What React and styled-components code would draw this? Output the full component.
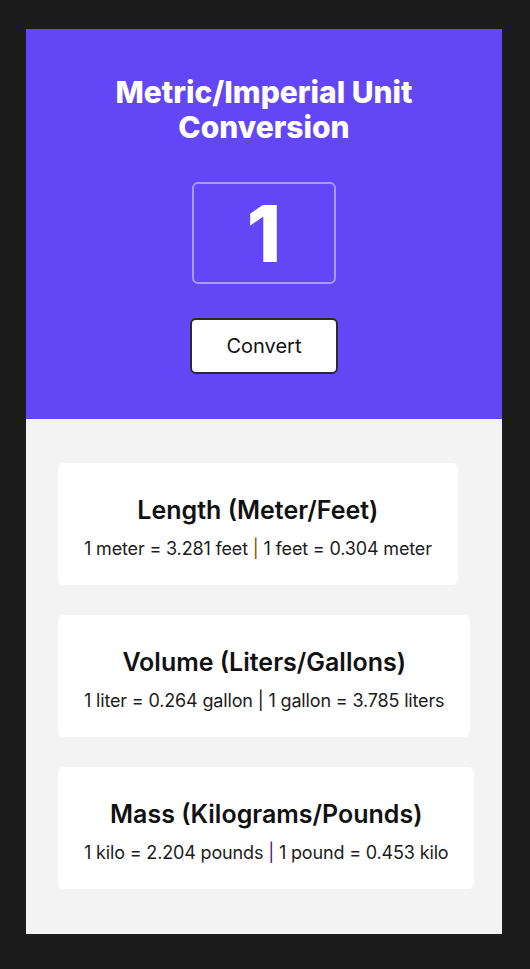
import React, { useState } from "react"
import styled, { createGlobalStyle } from "styled-components"

const GlobalStyle = createGlobalStyle`
  html, body {
    margin: 0;
    padding: 0;
    background: #1c1c1c;
    font-family: Inter, "Noto Sans", sans-serif;
  }
`

const Page = styled.main`
  width: 476px;
  margin: 29px 0 0 26px;
`

const Header = styled.section`
  background: #6346f5;
  color: #fff;
  display: flex;
  flex-direction: column;
  align-items: center;
  padding: 46px 20px 45px;
`

const Title = styled.h1`
  margin: 0;
  font-size: 30px;
  line-height: 35px;
  font-weight: 800;
  text-align: center;
  width: 340px;
`

const NumberInput = styled.input`
  margin-top: 37px;
  width: 144px;
  height: 102px;
  box-sizing: border-box;
  background: transparent;
  border: 2px solid rgba(255, 255, 255, 0.45);
  border-radius: 6px;
  color: #fff;
  font-family: inherit;
  font-size: 78px;
  font-weight: 800;
  text-align: center;
  outline: none;
`

const ConvertButton = styled.button`
  margin-top: 34px;
  width: 148px;
  height: 56px;
  background: #fff;
  border: 2px solid #2a2a2a;
  border-radius: 6px;
  font-family: inherit;
  font-size: 20px;
  color: #111;
  cursor: pointer;
`

const Results = styled.section`
  background: #f3f3f3;
  padding: 44px 32px 45px;
  display: flex;
  flex-direction: column;
  align-items: flex-start;
  gap: 30px;
`

const Card = styled.div`
  background: #fff;
  border-radius: 6px;
  padding: 32px 26px 24px;
  text-align: center;
  white-space: nowrap;
`

const CardTitle = styled.h2`
  margin: 0 0 12px;
  font-size: 25px;
  line-height: 30px;
  font-weight: 600;
  color: #111;
`

const CardText = styled.p`
  margin: 0;
  font-size: 18px;
  line-height: 24px;
  letter-spacing: -0.16px;
  color: #1c1c1c;
`

const Sep = styled.span`
  color: ${p => p.color};
`

export default function App() {
  const [value, setValue] = useState("1")
  const n = parseFloat(value) || 0
  const fmt = x => (Math.floor(x * 1000) / 1000).toString()

  const rows = [
    {
      title: "Length (Meter/Feet)",
      left: `${value} meter = ${fmt(n * 3.281)} feet`,
      right: `${value} feet = ${fmt(n * 0.3048)} meter`,
      sep: "#8a4a00",
    },
    {
      title: "Volume (Liters/Gallons)",
      left: `${value} liter = ${fmt(n * 0.264)} gallon`,
      right: `${value} gallon = ${fmt(n * 3.785)} liters`,
      sep: "#111",
    },
    {
      title: "Mass (Kilograms/Pounds)",
      left: `${value} kilo = ${fmt(n * 2.204)} pounds`,
      right: `${value} pound = ${fmt(n * 0.4536)} kilo`,
      sep: "#4a1680",
    },
  ]

  return (
    <>
      <GlobalStyle />
      <Page>
        <Header>
          <Title>Metric/Imperial Unit Conversion</Title>
          <NumberInput value={value} onChange={e => setValue(e.target.value)} />
          <ConvertButton>Convert</ConvertButton>
        </Header>
        <Results>
          {rows.map(r => (
            <Card key={r.title}>
              <CardTitle>{r.title}</CardTitle>
              <CardText>
                {r.left} <Sep color={r.sep}>|</Sep> {r.right}
              </CardText>
            </Card>
          ))}
        </Results>
      </Page>
    </>
  )
}
